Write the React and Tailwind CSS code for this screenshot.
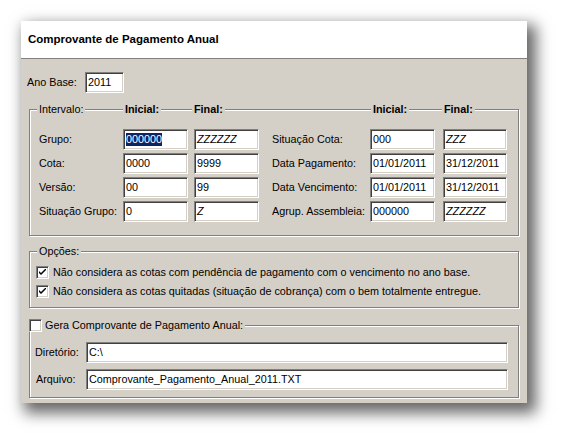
import React from 'react';

const sunken =
  'bg-white border border-t-[#808080] border-l-[#808080] border-b-white border-r-white shadow-[inset_1px_1px_0_#404040,inset_-1px_-1px_0_#d4d0c8]';
const etched = 'border border-[#808080] shadow-[inset_1px_1px_0_#fff,1px_1px_0_#fff]';

function Field({ value, selected, italic, className = '' }) {
  return (
    <div className={`${sunken} h-[21px] flex items-center pl-[2px] overflow-hidden whitespace-nowrap ${className}`}>
      <span className={`${selected ? 'bg-[#0a246a] text-white' : ''} ${italic ? 'italic' : ''}`}>{value}</span>
    </div>
  );
}

function Check({ checked }) {
  return (
    <span className={`${sunken} w-[13px] h-[13px] shrink-0 flex items-center justify-center`}>
      {checked && (
        <svg width="7" height="7" viewBox="0 0 7 7">
          <path d="M0 2 L0 4 L2 6 L7 1 L7 -1 L2 4 Z" fill="#000" />
        </svg>
      )}
    </span>
  );
}

const rows = [
  ['Grupo:', '000000', 'ZZZZZZ', 'Situação Cota:', '000', 'ZZZ'],
  ['Cota:', '0000', '9999', 'Data Pagamento:', '01/01/2011', '31/12/2011'],
  ['Versão:', '00', '99', 'Data Vencimento:', '01/01/2011', '31/12/2011'],
  ['Situação Grupo:', '0', 'Z', 'Agrup. Assembleia:', '000000', 'ZZZZZZ'],
];

export default function App() {
  return (
    <div className="w-[569px] h-[447px] bg-white pt-[21px] pl-[21px] font-['Liberation_Sans',Arial,sans-serif] text-[10.8px] text-black leading-[13px]">
      <div className="w-[506px] shadow-[6px_7px_14px_3px_rgba(0,0,0,0.6)]">
        {/* header */}
        <div className="h-[38px] bg-white border-b border-[#808080] flex items-center pl-[7px]">
          <span className="font-bold text-[11.5px]">Comprovante de Pagamento Anual</span>
        </div>

        <div className="bg-[#d4d0c8] pt-[13px] pb-[5px] pl-[6px]">
          {/* Ano Base */}
          <div className="flex items-center">
            <span className="w-[58px]">Ano Base:</span>
            <Field value="2011" className="w-[39px]" />
          </div>

          {/* Intervalo */}
          <div className={`${etched} mt-[16px] ml-[2px] w-[490px] pl-[9px] pb-[13px]`}>
            <div className="grid grid-cols-[84px_71px_78px_98px_73px_64px] -mt-[7px]">
              <span className="-ml-[2px] px-[2px] bg-[#d4d0c8] w-fit">Intervalo:</span>
              <span className="pl-[2px] pr-[2px] bg-[#d4d0c8] w-fit font-bold">Inicial:</span>
              <span className="-ml-[2px] px-[2px] bg-[#d4d0c8] w-fit font-bold">Final:</span>
              <span />
              <span className="ml-[1px] px-[2px] bg-[#d4d0c8] w-fit font-bold">Inicial:</span>
              <span className="-ml-[1px] px-[2px] bg-[#d4d0c8] w-fit font-bold">Final:</span>
            </div>
            <div className="grid grid-cols-[84px_71px_78px_98px_73px_64px] gap-y-[3px] mt-[13px]">
              {rows.map((r, i) => (
                <React.Fragment key={i}>
                  <span className="flex items-center">{r[0]}</span>
                  <Field value={r[1]} selected={i === 0} className="w-[65px]" />
                  <Field value={r[2]} italic={r[2].startsWith('Z')} className="w-[65px]" />
                  <span className="flex items-center">{r[3]}</span>
                  <Field value={r[4]} className="w-[65px]" />
                  <Field value={r[5]} italic={r[5].startsWith('Z')} className="w-[64px]" />
                </React.Fragment>
              ))}
            </div>
          </div>

          {/* Opções */}
          <div className={`${etched} mt-[15px] ml-[2px] w-[490px] pl-[6px] pb-[6px]`}>
            <div className="flex -mt-[7px]">
              <span className="ml-[1px] px-[2px] bg-[#d4d0c8]">Opções:</span>
            </div>
            <div className="mt-[5px]">
              <div className="h-[19px] flex items-center gap-[4px]">
                <Check checked />
                <span>Não considera as cotas com pendência de pagamento com o vencimento no ano base.</span>
              </div>
              <div className="h-[19px] flex items-center gap-[4px]">
                <Check checked />
                <span>Não considera as cotas quitadas (situação de cobrança) com o bem totalmente entregue.</span>
              </div>
            </div>
          </div>

          {/* Gera Comprovante */}
          <div className={`${etched} mt-[17px] ml-[2px] w-[490px] pl-[5px] pb-[7px]`}>
            <div className="flex items-center -mt-[7px] -ml-[6px]">
              <span className="bg-[#d4d0c8] flex">
                <Check />
              </span>
              <span className="pl-[3px] pr-[2px] bg-[#d4d0c8]">Gera Comprovante de Pagamento Anual:</span>
            </div>
            <div className="mt-[10px] flex flex-col gap-[6px]">
              <div className="flex items-center">
                <span className="w-[51px]">Diretório:</span>
                <Field value="C:\" className="w-[422px]" />
              </div>
              <div className="flex items-center">
                <span className="w-[51px] pl-[1px]">Arquivo:</span>
                <Field value="Comprovante_Pagamento_Anual_2011.TXT" className="w-[422px]" />
              </div>
            </div>
          </div>
        </div>
      </div>
    </div>
  );
}
